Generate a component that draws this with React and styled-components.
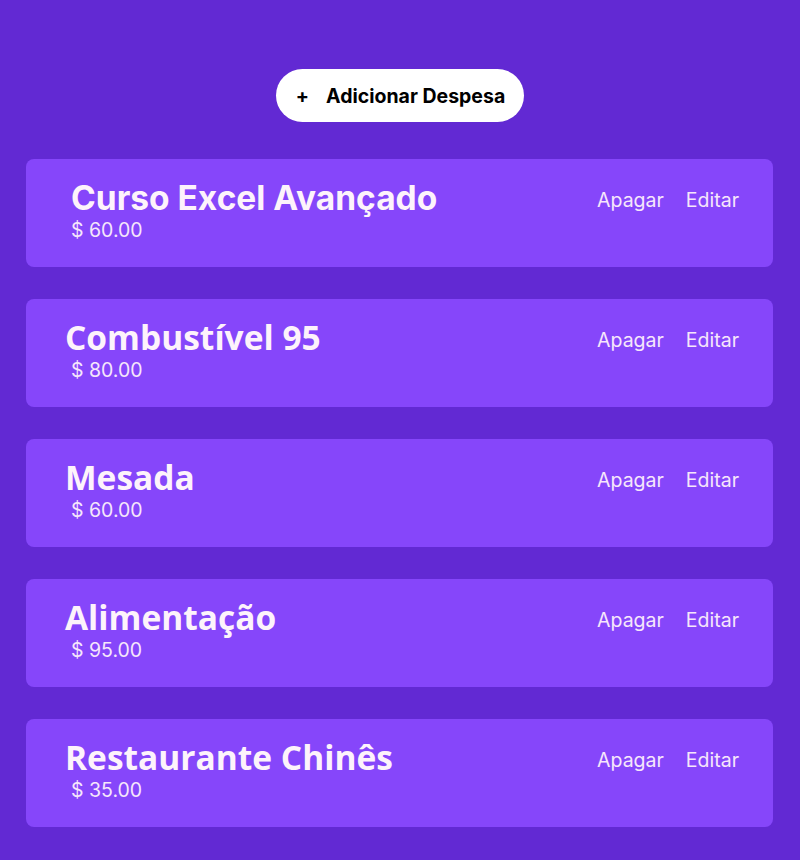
import React from 'react'
import styled, { createGlobalStyle } from 'styled-components'

const GlobalStyle = createGlobalStyle`
  html, body {
    margin: 0;
    padding: 0;
    background-color: #6229d3;
  }
  * {
    box-sizing: border-box;
  }
`

const Page = styled.div`
  width: 800px;
  min-height: 860px;
  padding: 69px 27px 0 26px;
  font-family: Inter, "Liberation Sans", sans-serif;
  display: flex;
  flex-direction: column;
  align-items: center;
`

const AddButton = styled.button`
  width: 248px;
  height: 53px;
  border: none;
  border-radius: 27px;
  background-color: #ffffff;
  color: #000000;
  font-family: Inter, "Liberation Sans", sans-serif;
  font-size: 19.5px;
  font-weight: 700;
  display: flex;
  align-items: center;
  justify-content: center;
  gap: 17px;
  padding: 0 0 0 2px;
  cursor: pointer;
`

const List = styled.ul`
  list-style: none;
  margin: 37px 0 0;
  padding: 0;
  width: 100%;
  display: flex;
  flex-direction: column;
  gap: 32px;
`

const Card = styled.li`
  height: 108px;
  background-color: #8646fa;
  border-radius: 8px;
  display: flex;
  justify-content: space-between;
  align-items: flex-start;
  padding: 20px 34px 0 45px;
`

const Info = styled.div`
  display: flex;
  flex-direction: column;
`

const Title = styled.h2`
  margin: ${(p) => (p.$alt ? '-1px 0 1px -6px' : '0')};
  font-family: ${(p) => (p.$alt ? '"Open Sans", Roboto, sans-serif' : 'Inter, "Liberation Sans", sans-serif')};
  font-size: 33.5px;
  font-weight: 700;
  line-height: 38px;
  color: #fdf3fb;
`

const Amount = styled.span`
  font-size: 19.5px;
  line-height: 26px;
  color: #f6e6fb;
`

const Actions = styled.div`
  display: flex;
  gap: 22px;
  padding-top: 9px;
`

const ActionLink = styled.span`
  font-size: 19.5px;
  color: #f6e6fb;
  cursor: pointer;
`

const expenses = [
  { id: 1, title: 'Curso Excel Avançado', amount: 60 },
  { id: 2, title: 'Combustível 95', amount: 80 },
  { id: 3, title: 'Mesada', amount: 60 },
  { id: 4, title: 'Alimentação', amount: 95 },
  { id: 5, title: 'Restaurante Chinês', amount: 35 },
]

export default function App() {
  return (
    <>
      <GlobalStyle />
      <Page>
        <AddButton>
          <span>+</span>
          <span>Adicionar Despesa</span>
        </AddButton>
        <List>
          {expenses.map((item, index) => (
            <Card key={item.id}>
              <Info>
                <Title $alt={index > 0}>{item.title}</Title>
                <Amount>$ {item.amount.toFixed(2)}</Amount>
              </Info>
              <Actions>
                <ActionLink>Apagar</ActionLink>
                <ActionLink>Editar</ActionLink>
              </Actions>
            </Card>
          ))}
        </List>
      </Page>
    </>
  )
}
